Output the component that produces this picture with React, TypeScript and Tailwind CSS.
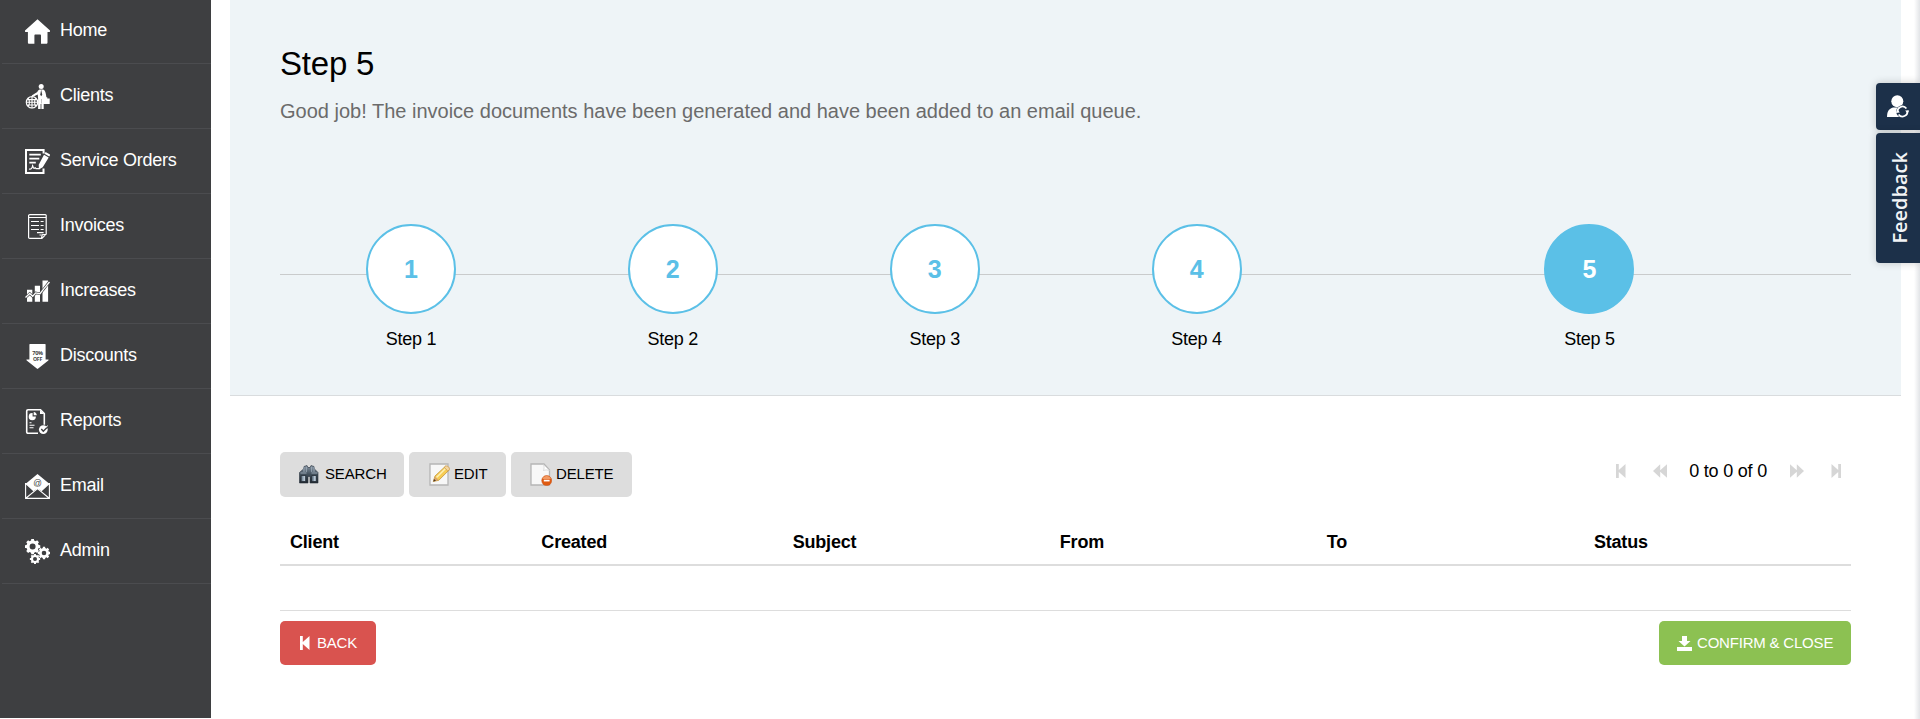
import React from 'react';

const I = ({ children, box = '0 0 25 25' }: { children: React.ReactNode; box?: string }) => (
  <svg viewBox={box} className="h-[25px] w-[25px] shrink-0" fill="#fff">{children}</svg>
);

const gear = (cx: number, cy: number, r: number, hole: number, teeth: number) => {
  const pts: string[] = [];
  for (let i = 0; i < teeth; i++) {
    const a = (i / teeth) * Math.PI * 2 - Math.PI / 2;
    const s = Math.PI / teeth;
    const put = (ang: number, rad: number) => pts.push(`${(cx + Math.cos(ang) * rad).toFixed(2)} ${(cy + Math.sin(ang) * rad).toFixed(2)}`);
    put(a - s * 0.62, r * 0.8);
    put(a - s * 0.45, r);
    put(a + s * 0.45, r);
    put(a + s * 0.62, r * 0.8);
  }
  return `M${pts.join('L')}ZM${cx - hole} ${cy}a${hole} ${hole} 0 1 0 ${hole * 2} 0a${hole} ${hole} 0 1 0 ${-hole * 2} 0Z`;
};

const HomeIcon = () => (
  <I><path d="M12.5 0.2 25 11.6c.3 1-.4 1.5-1.3 1.3h-1.2v10.6c0 .8-.5 1.3-1.3 1.3H16V16.600c0-.9-.4-1.200-1-1.200h-4.600c-.6 0-1 .3-1 1.200v8.200H4.200c-.8 0-1.300-.5-1.300-1.300V12.900H1.300C.4 13.100-.3 12.600 0 11.600Z" /></I>
);
const ClientsIcon = () => (
  <I>
    <circle cx="16.200" cy="2.500" r="2.500" />
    <path d="M14.500 5.400h3.500c2 .5 3 3.600 3.500 8.600h-1.800v1h-3v4.500h2V25h-2.300v-5h-.8v5h-2.500V14l-.4-3.400L7.500 13l-.8-1.400 5.600-3.500c.4-1.500 1.200-2.300 2.200-2.700Z" />
    <path d="M17 14.500h2v-1.200h3.300v1.200h2.400V20H17Z" />
    <circle cx="7" cy="18.300" r="5.700" fill="none" stroke="#fff" strokeWidth="1.200" />
    <path d="M1.500 18.300h11M7 12.700v11.500M3.300 14.200c1.500 2.200 1.500 6 0 8M10.700 14.200c-1.500 2.200-1.500 6 0 8M2.500 15.600h9M2.500 21h9" stroke="#fff" strokeWidth="1.100" fill="none" />
    <path d="m16.200 5.800 1 5-1 1.500-1-1.500Z" fill="#3e3f41" />
  </I>
);
const OrdersIcon = () => (
  <I>
    <path d="M18.600 4.500V1H1v23h17.500v-4.500" fill="none" stroke="#fff" strokeWidth="2" />
    <path d="M4.300 5.600h11.500M4.300 9.600h10M4.300 13.600h6.500" stroke="#fff" strokeWidth="1.800" />
    <path d="M4 20c2.200.6 3.400-1.200 3.600-3.300.8 1.200.3 2.500 1.600 2.600l1-.6.8 1h3.500" fill="none" stroke="#fff" strokeWidth="1.200" />
    <path d="m21 3.200 3.600 2c.5.300.5.800.3 1.200l-.7 1.100-4.700-2.700.7-1.200c.2-.4.5-.5.800-.4Zm-2 2.500 4.700 2.700-6 9.900-3.800 2.200-.2-4.700Z" />
  </I>
);
const InvoicesIcon = () => (
  <I>
    <path d="M4.800.6h15.400c.7 0 1 .4 1 1v18.500l-4.300 4.300H4.800c-.8 0-1.200-.4-1.200-1.200V1.600c0-.6.500-1 1.200-1ZM3.600 3.500h17.600M16.500 24.200l.7-3.500 4-.4" fill="none" stroke="#fff" strokeWidth="1.200" />
    <path d="M6 7.500h8M15.600 7.500h3M6 11.500h8M15.600 11.500h3M6 15.500h8M15.600 15.500h3M12 18.700h6.600M14.500 21h2" stroke="#fff" strokeWidth="1.200" />
  </I>
);
const IncreasesIcon = () => (
  <I>
    <path d="M2 10.800h5.300v12H2ZM9.800 6.800H15v16H9.800ZM17.500 1.500h5.600v21.300h-5.600Z" />
    <path d="m.5 18.500 4.200-4 3 2.800 3-3.400 4.300.8 4-5L24.200 3" fill="none" stroke="#3e3f41" strokeWidth="2.600" />
    <path d="m.5 18.500 4.200-4 3 2.800 3-3.400 4.300.8 4-5L24.500 3" fill="none" stroke="#fff" strokeWidth="1.300" />
  </I>
);
const DiscountsIcon = () => (
  <I>
    <path d="M5 0h15v0c.5 0 .6.200.6.600V15.500H23c.7 0 .8.400.3.900l-10.100 8.200c-.5.400-.9.400-1.400 0L1.700 16.400c-.5-.5-.4-.9.300-.9h2.400V.6c0-.4.200-.6.600-.6Z" />
    <text x="12.500" y="11" textAnchor="middle" fill="#3e3f41" className="font-['Open_Sans'] text-[5.500px] font-bold">70%</text>
    <text x="12.500" y="16.600" textAnchor="middle" fill="#3e3f41" className="font-['Open_Sans'] text-[5.200px] font-bold">OFF</text>
  </I>
);
const ReportsIcon = () => (
  <I>
    <path d="M13 24.300H3c-.8 0-1.300-.4-1.300-1.200V2c0-.8.500-1.200 1.300-1.200h12.500l3.800 3.700v11.200" fill="none" stroke="#fff" strokeWidth="1.600" />
    <path d="M15 1v4h4.300Z" />
    <path d="M7.600 4v3.500h3.300A3.600 3.600 0 1 1 7.600 4ZM8.700 3c1.800.1 3 1.200 3.100 3.300H8.700Z" />
    <path d="M4.500 13.700h2M4.500 16.300h5M4.500 18.700h4" stroke="#fff" strokeWidth="1.100" />
    <circle cx="18.300" cy="20.600" r="4.400" />
    <path d="m16.300 20 2 2.200L23 17.500" fill="none" stroke="#3e3f41" strokeWidth="1.400" />
    <path d="m21 18.200 1.800-1.500" stroke="#fff" strokeWidth="1" />
  </I>
);
const EmailIcon = () => (
  <I>
    <path d="M12.500 0 24 9.500 16.500 17l-4-2.200-4 2.200L1 9.500Z" />
    <path d="M.6 9v15.400h23.800V9M.8 24.200l11.700-9.600 11.700 9.600M.8 9.500l8 7.400M24.200 9.500l-8 7.400" fill="none" stroke="#fff" strokeWidth="1.100" />
    <text x="12.500" y="11.600" textAnchor="middle" fill="#3e3f41" className="font-['Liberation_Sans'] text-[8.500px]">@</text>
  </I>
);
const AdminIcon = () => (
  <I>
    <path fillRule="evenodd" d={gear(7.600, 7.600, 7.800, 3, 8)} />
    <path fillRule="evenodd" d={gear(19, 14, 6.300, 2.300, 8)} />
    <path fillRule="evenodd" d={gear(10, 20, 5.200, 2, 8)} />
  </I>
);

const menu: [string, React.FC][] = [
  ['Home', HomeIcon],
  ['Clients', ClientsIcon],
  ['Service Orders', OrdersIcon],
  ['Invoices', InvoicesIcon],
  ['Increases', IncreasesIcon],
  ['Discounts', DiscountsIcon],
  ['Reports', ReportsIcon],
  ['Email', EmailIcon],
  ['Admin', AdminIcon],
];

const SearchIcon = () => (
  <svg viewBox="0 0 20 19" className="h-[19px] w-5">
    <defs>
      <linearGradient id="bino" x1="0" y1="0" x2="0" y2="1">
        <stop offset="0" stopColor="#8795a3" /><stop offset=".5" stopColor="#42505c" /><stop offset="1" stopColor="#1f262d" />
      </linearGradient>
    </defs>
    <path d="M5 1.500 8 .5l1 2h2l1-2 3 1 .5 2.500L19 7.500V18h-8v-6.500H9V18H.5V7.500l4-3.500Z" fill="url(#bino)" stroke="#28333e" strokeWidth=".6" />
    <path d="M5 2v5M7.300 2v5M12.700 2v5M15 2v5M1.500 8h6M12.500 8h6" stroke="#a9b8c5" strokeWidth=".8" />
    <path d="M2.200 10.500h4.500v6H2.200ZM12.900 10.500h4.500v6h-4.500Z" fill="#8496a6" stroke="#1f272f" strokeWidth=".7" />
    <path d="M4.500 11h1.500v5H4.500ZM15 11h1.500v5H15Z" fill="#b7c5d1" />
  </svg>
);
const EditIcon = () => (
  <svg viewBox="0 0 21 23" className="h-[23px] w-[21px]">
    <path d="M1 1h18v21H1Z" fill="#f7f7f7" stroke="#b5b5b5" strokeWidth="1.300" />
    <path d="M4.300 18.500 6 13 16.500 3.200l3.800 3.600-10.500 10.500Z" fill="#f7cc52" stroke="#b98b2c" strokeWidth=".7" />
    <path d="m7.500 14.500 9.800-9.700" stroke="#fdf0b4" strokeWidth="1.500" />
    <path d="m15.300 4.300 1.500-1.400c1.700-.5 4 1.700 3.700 3.400l-1.600 1.900Z" fill="#f5d6a0" stroke="#c99748" strokeWidth=".7" />
    <path d="M6 13.400 4.300 18.500l5.200-1.400Z" fill="#d9a56a" />
    <path d="m5 16-.7 2.500 2.700-.7Z" fill="#4a3728" />
  </svg>
);
const DeleteIcon = () => (
  <svg viewBox="0 0 22 23" className="h-[23px] w-[22px]">
    <path d="M1 1h13l5.500 6v15H1Z" fill="#f8f8f8" stroke="#b5b5b5" strokeWidth="1.300" />
    <path d="M13.500 1.500c1 2 .5 4.500 0 6 2-.8 4-.7 6 0Z" fill="#fff" stroke="#cfcfcf" strokeWidth=".7" />
    <circle cx="16.700" cy="17.600" r="5" fill="#df5b12" stroke="#c8571b" strokeWidth=".5" />
    <path d="M12.500 16a4.500 4.500 0 0 1 8.400 0Z" fill="#f29a63" />
    <path d="M13.800 17.600h5.800" stroke="#fff" strokeWidth="1.700" />
  </svg>
);

const StepBack = ({ className }: { className: string }) => (
  <svg viewBox="0 0 10 14" className={`h-[14px] w-[10px] ${className}`} fill="currentColor"><path d="M0 0h2.800v6L9.500 0v14l-6.700-6V14H0Z" /></svg>
);
const Rewind = ({ className }: { className: string }) => (
  <svg viewBox="0 0 14 14" className={`h-[14px] w-[14px] ${className}`} fill="currentColor"><path d="M7.200.3V6.200L14 .3v13.400L7.200 7.800v5.900L0 7Z" /></svg>
);

const tools: [string, React.FC, string][] = [
  ['SEARCH', SearchIcon, 'w-[124px] pl-[19px] gap-[6px]'],
  ['EDIT', EditIcon, 'w-[97px] pl-[20px] gap-[4px]'],
  ['DELETE', DeleteIcon, 'w-[121px] pl-[19px] gap-[4px]'],
];

export default function App() {
  return (
    <div className="relative flex h-[719px] w-full overflow-hidden bg-white font-['Liberation_Sans',Arial,sans-serif] text-black">
      <nav className="h-[718px] w-[211px] shrink-0 bg-[#3e3f41]">
        <ul className="-mt-px">
          {menu.map(([label, Icon]) => (
            <li key={label} className="ml-[2px] flex h-[65px] items-center gap-[10px] border-b border-[#4b4c4f] pl-[23px] text-[18px] tracking-[-0.25px] text-white">
              <span className="pt-[1px]"><Icon /></span>
              <span className="pb-[2px]">{label}</span>
            </li>
          ))}
        </ul>
      </nav>

      <main className="ml-[19px] w-[1671px] shrink-0">
        <section className="h-[396px] border-b border-[#d9dcde] bg-[#eef4f7] px-[50px] pt-[44px]">
          <h1 className="h-[40px] text-[33px] leading-[40px] tracking-[-0.2px]">Step 5</h1>
          <p className="mt-[13px] h-[28px] text-[20px] leading-[28px] text-[#6b6b6b]">
            Good job! The invoice documents have been generated and have been added to an email queue.
          </p>
          <div className="relative mt-[99px]">
            <div className="absolute top-[50px] h-px w-full bg-[#c9cbcc]" />
            <ol className="relative grid w-[1571.3px] grid-cols-[1fr_1fr_1fr_1fr_2fr]">
              {[1, 2, 3, 4, 5].map((n) => (
                <li key={n} className="flex flex-col items-center">
                  <span className={`flex h-[90px] w-[90px] items-center justify-center rounded-full border-2 border-[#5bc0e7] pt-[2px] text-[25px] font-bold ${n === 5 ? 'bg-[#5bc0e7] text-white' : 'bg-white text-[#5bc0e7]'}`}>{n}</span>
                  <span className="mt-[13px] text-[18px] leading-[24px] tracking-[-0.25px]">Step {n}</span>
                </li>
              ))}
            </ol>
          </div>
        </section>

        <section className="px-[50px] pt-[56px]">
          <div className="flex h-[45px] justify-between">
            <div className="flex gap-[5px]">
              {tools.map(([label, Icon, cls]) => (
                <button key={label} className={`flex h-[45px] items-center rounded-[5px] bg-[#ddd] text-[15px] tracking-[-0.15px] ${cls}`}>
                  <Icon />
                  <span className="pb-[1px]">{label}</span>
                </button>
              ))}
            </div>
            <div className="flex h-[38px] items-center pr-[10px] text-[18px] tracking-[-0.2px] text-[#d6d6d6]">
              <StepBack className="mr-[27px]" />
              <Rewind className="mr-[22px]" />
              <span className="text-black">0 to 0 of 0</span>
              <Rewind className="ml-[23px] rotate-180" />
              <StepBack className="ml-[27px] rotate-180" />
            </div>
          </div>

          <div className="mt-[23px] grid h-[46px] grid-cols-[16fr_16fr_17fr_17fr_17fr_17fr] border-b-2 border-[#ddd] text-[18px] leading-[44px] font-bold tracking-[-0.2px]">
            {['Client', 'Created', 'Subject', 'From', 'To', 'Status'].map((h) => (
              <div key={h} className="pl-[10px]">{h}</div>
            ))}
          </div>
          <div className="h-[45px] border-b border-[#ddd]" />
          <div className="mt-[10px] flex justify-between text-[15px] tracking-[-0.2px] text-white">
            <button className="flex h-[44px] w-[96px] items-center gap-[7px] rounded-[5px] bg-[#d9534f] pl-[20px]">
              <StepBack className="" />
              BACK
            </button>
            <button className="flex h-[44px] w-[192px] items-center gap-[5px] rounded-[5px] bg-[#8cc152] pl-[18px] whitespace-nowrap">
              <svg viewBox="0 0 15 15" className="h-[15px] w-[15px]" fill="#fff"><path d="M5 0h5v5h3.500l-6 5.500L1.500 5H5ZM0 11h15v4H0Z" /></svg>
              CONFIRM &amp; CLOSE
            </button>
          </div>
        </section>
      </main>

      <div className="absolute top-0 right-0 h-full w-[6px] bg-gradient-to-r from-transparent to-[#e2e4e7]" />
      <aside className="absolute top-[83px] right-0 flex w-[44px] flex-col gap-[3px]">
        <div className="flex h-[47px] items-center rounded-l-[4px] bg-[#1c3049] pl-[11px] shadow-[0_0_8px_rgba(0,0,0,0.2)]">
          <svg viewBox="0 0 22 23" className="h-[23px] w-[22px]" fill="#fff">
            <circle cx="10.300" cy="6.300" r="6" />
            <path d="M0 22c0-5.500 2-8.500 6-9.500h8l3 9.500Z" />
            <circle cx="15.500" cy="16.500" r="6.300" fill="#1c3049" />
            <path d="M10.600 17.300a4.900 4.900 0 0 1 8.800-3.700M20.400 15.700a4.900 4.900 0 0 1-8.800 3.700" fill="none" stroke="#fff" strokeWidth="1.700" />
            <path d="m8.700 17.800 1.900-3.200 2.200 3ZM22.300 15.400l-1.900 3.200-2.200-3Z" />
          </svg>
        </div>
        <div className="flex h-[130px] items-center justify-center rounded-l-[4px] bg-[#1c3049] pl-[4px] shadow-[0_0_8px_rgba(0,0,0,0.2)]">
          <span className="rotate-180 font-['Open_Sans',sans-serif] text-[20px] font-semibold text-[#f2f4f6] [writing-mode:vertical-rl]">Feedback</span>
        </div>
      </aside>
    </div>
  );
}
